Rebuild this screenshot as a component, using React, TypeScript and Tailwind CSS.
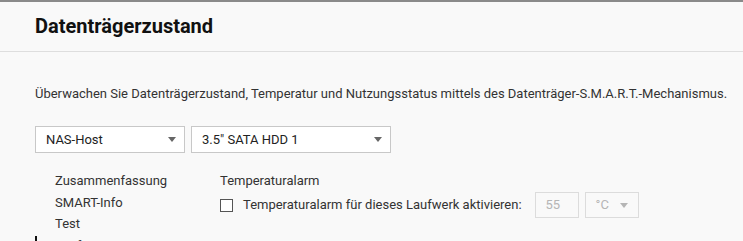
const font = { fontFamily: "Roboto, 'Liberation Sans', sans-serif" };

function Caret({ light }: { light?: boolean }) {
  return (
    <svg width="8" height="5" viewBox="0 0 8 5" className="shrink-0">
      <path d="M0 0h8L4 5z" fill={light ? "#b5b5b5" : "#666"} />
    </svg>
  );
}

function Select({ label, width }: { label: string; width: string }) {
  return (
    <div className={`${width} h-[27px] border border-[#c8c8c8] bg-white flex items-center justify-between pl-[10px] pr-[8px] text-[13px] text-[#222]`}>
      <span>{label}</span>
      <Caret />
    </div>
  );
}

export default function App() {
  const nav = ["Zusammenfassung", "SMART-Info", "Test", "Prüfungen"];
  return (
    <div className="w-[743px] h-[241px] overflow-hidden bg-[#f9f9f9] text-[#333] border-t-2 border-[#8a8a8a]" style={font}>
      <div className="h-[50px] border-b border-[#dedede] flex items-center pl-[35px]">
        <h1 className="text-[20px] font-bold text-[#111] leading-none mt-[-1px]">Datenträgerzustand</h1>
      </div>
      <div className="pl-[35px]">
        <p className="text-[13px] leading-[16px] mt-[34px]">
          Überwachen Sie Datenträgerzustand, Temperatur und Nutzungsstatus mittels des Datenträger-S.M.A.R.T.-Mechanismus.
        </p>
        <div className="flex gap-[6px] mt-[24px]">
          <Select label="NAS-Host" width="w-[150px]" />
          <Select label={'3.5" SATA HDD 1'} width="w-[200px]" />
        </div>
        <div className="flex mt-[18px]">
          <div className="w-[185px] flex flex-col text-[13px]">
            {nav.map((n, i) => (
              <div key={n} className={`h-[21.5px] leading-[20px] pl-[20px] ${i === 3 ? "border-l-2 border-[#111] pl-[18px]" : ""}`}>
                {n}
              </div>
            ))}
          </div>
          <div className="flex flex-col text-[13px]">
            <div className="leading-[20px]">Temperaturalarm</div>
            <div className="flex items-center mt-[1px]">
              <div className="w-[13px] h-[13px] border border-[#555] bg-white" />
              <span className="ml-[10px]">Temperaturalarm für dieses Laufwerk aktivieren:</span>
              <div className="ml-[13px] w-[44px] h-[26px] border border-[#dcdcdc] flex items-center pl-[10px] text-[#b5b5b5]">55</div>
              <div className="ml-[6px] w-[54px] h-[26px] border border-[#dcdcdc] flex items-center justify-between pl-[10px] pr-[10px] text-[#b5b5b5]">
                <span>°C</span>
                <Caret light />
              </div>
            </div>
          </div>
        </div>
      </div>
    </div>
  );
}
